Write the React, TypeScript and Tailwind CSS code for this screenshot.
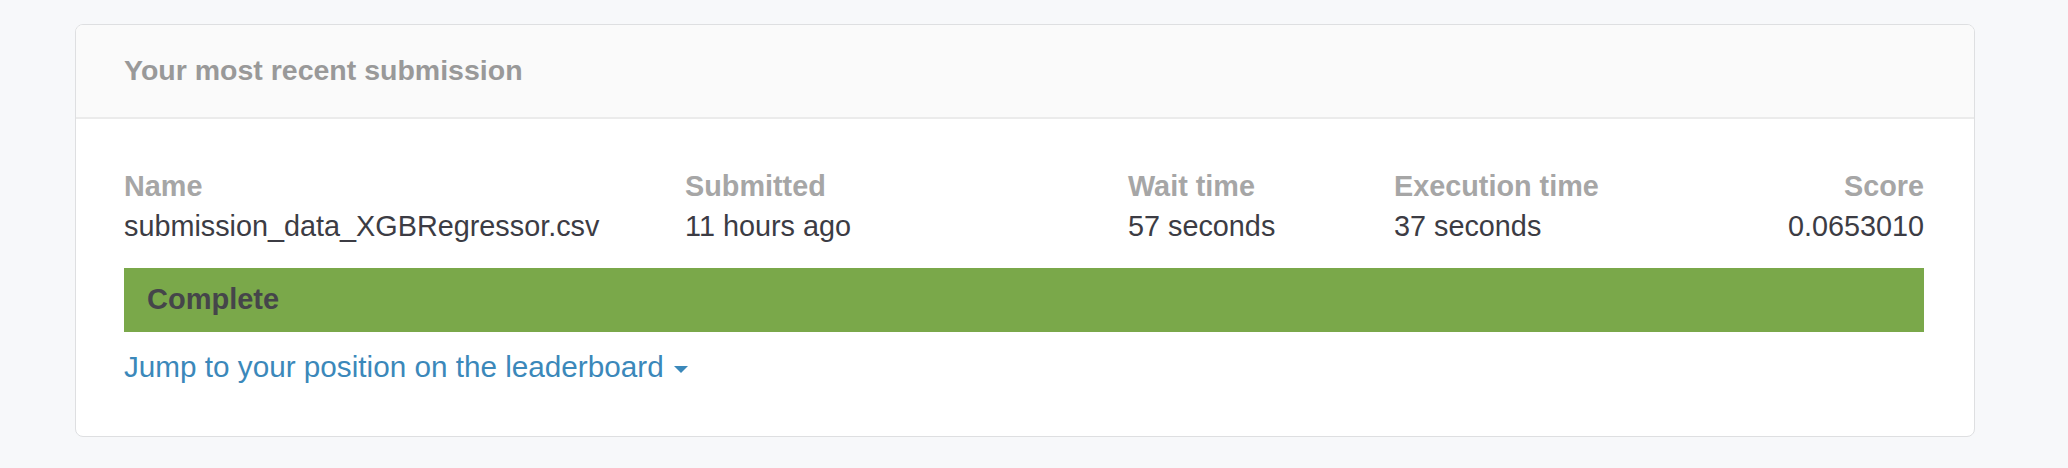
import React from 'react';

const columns = [
  { label: 'Name', value: 'submission_data_XGBRegressor.csv' },
  { label: 'Submitted', value: '11 hours ago' },
  { label: 'Wait time', value: '57 seconds' },
  { label: 'Execution time', value: '37 seconds' },
];

export default function App() {
  return (
    <div
      className="w-[2068px] h-[468px] bg-[#f7f8fa] pt-[24px] pl-[75px]"
      style={{ fontFamily: '"Liberation Sans", Arial, sans-serif' }}
    >
      <div className="w-[1900px] h-[413px] bg-white border border-[#dedfe1] rounded-[8px] overflow-hidden">
        {/* Header */}
        <div className="h-[94px] bg-[#fafafa] border-b-2 border-[#ebebeb] px-12 flex items-center">
          <h2 className="text-[28.5px] font-bold text-[#999999] pb-[2px]">Your most recent submission</h2>
        </div>

        {/* Body */}
        <div className="pl-12 pr-[50px] pt-[47px]">
          <div className="grid grid-cols-[561px_443px_266px_1fr_auto] text-[28.8px] leading-[40px]">
            {columns.map(c => (
              <div key={c.label}>
                <div className="font-bold text-[#a6a6a6]">{c.label}</div>
                <div className="text-[#3c3c44]">{c.value}</div>
              </div>
            ))}
            <div className="text-right">
              <div className="font-bold text-[#a6a6a6]">Score</div>
              <div className="text-[#3c3c44]">0.0653010</div>
            </div>
          </div>

          <div className="mt-[22px] h-[64px] bg-[#7aa84a] px-[23px] flex items-center">
            <span className="text-[29px] font-bold text-[#45454a]">Complete</span>
          </div>

          <div className="mt-[15px] leading-[40px] flex items-center gap-[10px]">
            <a className="text-[29.7px] text-[#3b88ba] cursor-pointer">Jump to your position on the leaderboard</a>
            <span className="w-0 h-0 border-l-[7px] border-r-[7px] border-t-[7px] border-l-transparent border-r-transparent border-t-[#3b88ba] mt-[4px]" />
          </div>
        </div>
      </div>
    </div>
  );
}
